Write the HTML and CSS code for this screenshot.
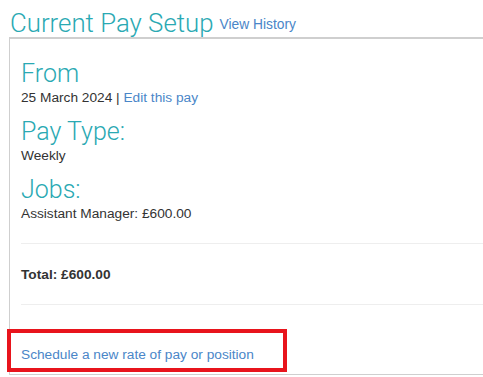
FILE: index.html
```html
<!DOCTYPE html>
<html lang="en">
<head>
  <meta charset="UTF-8">
  <title>Current Pay Setup</title>
  <link rel="stylesheet" href="styles.css">
</head>
<body>
  <div class="page-head">
    <h1>Current Pay Setup</h1>
    <a href="#" class="head-link">View History</a>
  </div>

  <div class="panel">
    <!-- From -->
    <h2>From</h2>
    <p class="line">25 March 2024 | <a href="#">Edit this pay</a></p>

    <!-- Pay type -->
    <h2>Pay Type:</h2>
    <p class="line">Weekly</p>

    <!-- Jobs -->
    <h2>Jobs:</h2>
    <p class="line">Assistant Manager: &pound;600.00</p>

    <div class="total">Total: &pound;600.00</div>

    <div class="schedule">
      <a href="#">Schedule a new rate of pay or position</a>
    </div>
  </div>

  <div class="highlight"></div>
</body>
</html>
```

FILE: styles.css
```css
body {
  font-family: "Liberation Sans", Arial, sans-serif;
  background: #fff;
  color: #333;
  margin: 0;
  padding: 0;
  height: 377px;
  overflow: hidden;
  position: relative;
}
a {
  color: #4a86c8;
  text-decoration: none;
}
.page-head {
  display: flex;
  align-items: baseline;
  padding: 8px 0 0 10px;
  height: 29px;
}
h1 {
  font-family: Roboto, "Liberation Sans", sans-serif;
  font-weight: 300;
  font-size: 25.8px;
  line-height: 30px;
  color: #2aa9b3;
  margin: 0;
}
.head-link {
  font-size: 13.8px;
  margin-left: 6px;
  position: relative;
  top: -3px;
}
.panel {
  margin-left: 9px;
  height: 338px;
  border: 1px solid #cfcfcf;
  border-top-width: 2px;
  border-right: none;
  padding: 0 0 0 11px;
  box-sizing: border-box;
}
h2 {
  font-family: Roboto, "Liberation Sans", sans-serif;
  font-weight: 300;
  font-size: 25px;
  line-height: 28px;
  color: #2aa9b3;
  margin: 0;
}
.panel h2:first-child {
  padding-top: 21px;
}
.line {
  font-size: 13.7px;
  line-height: 17px;
  margin: 1px 0 12px;
}
.total {
  border-top: 1px solid #eee;
  border-bottom: 1px solid #eee;
  margin-top: 21px;
  padding: 22px 0 21px;
  font-size: 13.7px;
  line-height: 17px;
  font-weight: bold;
}
.schedule {
  padding-top: 41px;
  font-size: 13.7px;
  line-height: 17px;
}
.highlight {
  position: absolute;
  left: 7px;
  top: 329px;
  width: 280px;
  height: 43px;
  border: 4px solid #e8141c;
  box-sizing: border-box;
}
```
